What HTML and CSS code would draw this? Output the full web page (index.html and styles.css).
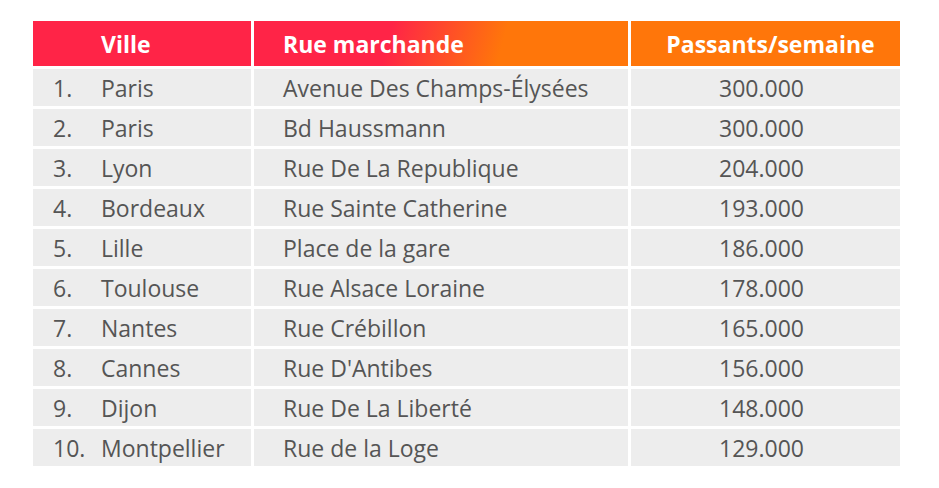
FILE: index.html
```html
<!DOCTYPE html>
<html lang="fr">
<head>
<meta charset="utf-8">
<title>Rues marchandes</title>
<link rel="stylesheet" href="styles.css">
</head>
<body>
<div class="table">
  <div class="row head">
    <div class="cell c1 h-red"><span class="num"></span>Ville</div>
    <div class="cell c2 h-grad">Rue marchande</div>
    <div class="cell c3 h-orange">Passants/semaine</div>
  </div>
  <div class="row"><div class="cell c1"><span class="num">1.</span>Paris</div><div class="cell c2">Avenue Des Champs-Élysées</div><div class="cell c3">300.000</div></div>
  <div class="row"><div class="cell c1"><span class="num">2.</span>Paris</div><div class="cell c2">Bd Haussmann</div><div class="cell c3">300.000</div></div>
  <div class="row"><div class="cell c1"><span class="num">3.</span>Lyon</div><div class="cell c2">Rue De La Republique</div><div class="cell c3">204.000</div></div>
  <div class="row"><div class="cell c1"><span class="num">4.</span>Bordeaux</div><div class="cell c2">Rue Sainte Catherine</div><div class="cell c3">193.000</div></div>
  <div class="row"><div class="cell c1"><span class="num">5.</span>Lille</div><div class="cell c2">Place de la gare</div><div class="cell c3">186.000</div></div>
  <div class="row"><div class="cell c1"><span class="num">6.</span>Toulouse</div><div class="cell c2">Rue Alsace Loraine</div><div class="cell c3">178.000</div></div>
  <div class="row"><div class="cell c1"><span class="num">7.</span>Nantes</div><div class="cell c2">Rue Crébillon</div><div class="cell c3">165.000</div></div>
  <div class="row"><div class="cell c1"><span class="num">8.</span>Cannes</div><div class="cell c2">Rue D'Antibes</div><div class="cell c3">156.000</div></div>
  <div class="row"><div class="cell c1"><span class="num">9.</span>Dijon</div><div class="cell c2">Rue De La Liberté</div><div class="cell c3">148.000</div></div>
  <div class="row"><div class="cell c1"><span class="num">10.</span>Montpellier</div><div class="cell c2">Rue de la Loge</div><div class="cell c3">129.000</div></div>
</div>
</body>
</html>
```
FILE: styles.css
```css
html, body {
  margin: 0;
  padding: 0;
  background: #ffffff;
}
body {
  font-family: "Open Sans", "Lato", sans-serif;
  color: #555555;
}
.table {
  margin: 21px 0 0 33px;
  width: 867px;
  display: flex;
  flex-direction: column;
  gap: 3px;
}
.row {
  display: grid;
  grid-template-columns: 218px 374px 269px;
  gap: 3px;
  height: 37px;
}
.row.head {
  height: 45px;
}
.cell {
  display: flex;
  align-items: center;
  background: #ededed;
  font-size: 23px;
  white-space: nowrap;
}
.c1 {
  padding-left: 20px;
}
.num {
  display: inline-block;
  width: 48px;
}
.c2 {
  padding-left: 29px;
}
.c3 {
  justify-content: center;
  padding-right: 8px;
}
.head .cell {
  color: #ffffff;
  font-weight: 700;
  font-size: 23px;
}
.head .c3 {
  padding-right: 0;
  padding-left: 10px;
}
.h-red {
  background: #ff2447;
}
.h-grad {
  background: linear-gradient(105deg, #ff2447 36%, #ff760a 66%);
}
.h-orange {
  background: #ff760a;
}
```
